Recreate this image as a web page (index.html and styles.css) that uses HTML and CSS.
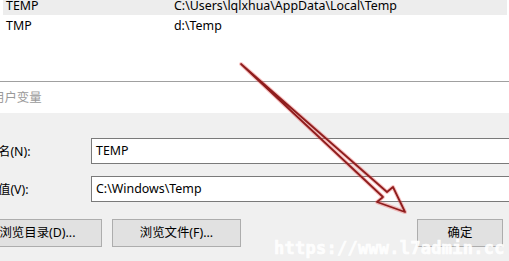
FILE: index.html
```html
<!DOCTYPE html>
<html lang="zh-CN">
<head>
<meta charset="utf-8">
<title>编辑用户变量</title>
<link rel="stylesheet" href="styles.css">
</head>
<body>
<div class="screen">
  <div class="list">
    <div class="row sel"><span class="c1">TEMP</span><span class="c2">C:\Users\lqlxhua\AppData\Local\Temp</span></div>
    <div class="row"><span class="c1">TMP</span><span class="c2">d:\Temp</span></div>
  </div>
  <div class="group">用户变量</div>
  <div class="form">
    <div class="field first">
      <span class="label">名(N):</span>
      <div class="input">TEMP</div>
    </div>
    <div class="field">
      <span class="label">值(V):</span>
      <div class="input">C:\Windows\Temp</div>
    </div>
    <div class="buttons">
      <div class="btn b1">浏览目录(D)...</div>
      <div class="btn b2">浏览文件(F)...</div>
      <div class="btn b3">确定</div>
    </div>
  </div>
  <svg class="arrow" width="509" height="261" viewBox="0 0 509 261">
    <polygon class="glow" points="241,64 383,197 377,202 405,212 393,187 387,192"/>
    <polygon class="line" points="241,64 383,197 377,202 405,212 393,187 387,192"/>
  </svg>
  <div class="watermark">https://www.l7admin.cc</div>
</div>
</body>
</html>
```
FILE: styles.css
```css
html, body {
  margin: 0;
  padding: 0;
  background: #f0f0f0;
}
.screen {
  position: relative;
  width: 509px;
  height: 261px;
  overflow: hidden;
  font-family: "Noto Sans", "Noto Sans CJK SC", sans-serif;
  font-size: 12.4px;
  color: #000;
}
.list {
  background: #fff;
  margin-top: -5px;
  height: 86px;
  border-bottom: 1px solid #a0a0a0;
}
.row {
  height: 20px;
  display: flex;
  align-items: center;
  margin-left: 3px;
  margin-right: 2px;
}
.row.sel {
  background: #ededed;
}
.c1 {
  width: 168px;
  flex-shrink: 0;
  padding-left: 3px;
}
.c2 {
  flex: 1;
  white-space: nowrap;
}
.group {
  background: #fff;
  height: 31px;
  line-height: 31px;
  text-indent: -8px;
  color: #9a9a9a;
}
.form {
  background: #f0f0f0;
  padding-top: 25px;
}
.field {
  display: flex;
  align-items: center;
  margin-bottom: 12px;
}
.label {
  width: 93px;
  flex-shrink: 0;
  margin-left: -2px;
}
.input {
  flex-shrink: 0;
  width: 440px;
  height: 24px;
  line-height: 24px;
  border: 1px solid #7a7a7a;
  background: #fff;
  padding-left: 4px;
  box-sizing: content-box;
}
.buttons {
  display: flex;
  margin-top: 17px;
}
.btn {
  flex-shrink: 0;
  height: 26px;
  line-height: 26px;
  background: #e1e1e1;
  border: 1px solid #adadad;
  text-align: center;
  white-space: nowrap;
}
.b1 {
  width: 127px;
  margin-left: -27px;
}
.b2 {
  width: 127px;
  margin-left: 10px;
}
.b3 {
  width: 84px;
  margin-left: auto;
  margin-right: 6px;
}
.arrow {
  position: absolute;
  left: 0;
  top: 0;
  pointer-events: none;
}
.arrow .glow {
  fill: none;
  stroke: rgba(235, 80, 80, 0.35);
  stroke-width: 4;
  stroke-linejoin: round;
}
.arrow .line {
  fill: none;
  stroke: #8f1d1d;
  stroke-width: 1.8;
  stroke-linejoin: round;
}
.watermark {
  position: absolute;
  left: 274px;
  top: 238px;
  font-family: "DejaVu Sans Mono", monospace;
  font-weight: bold;
  font-size: 17px;
  letter-spacing: 0.25px;
  color: rgba(255, 255, 255, 0.92);
  -webkit-text-stroke: 0.6px rgba(255, 255, 255, 0.92);
  white-space: nowrap;
}
```
